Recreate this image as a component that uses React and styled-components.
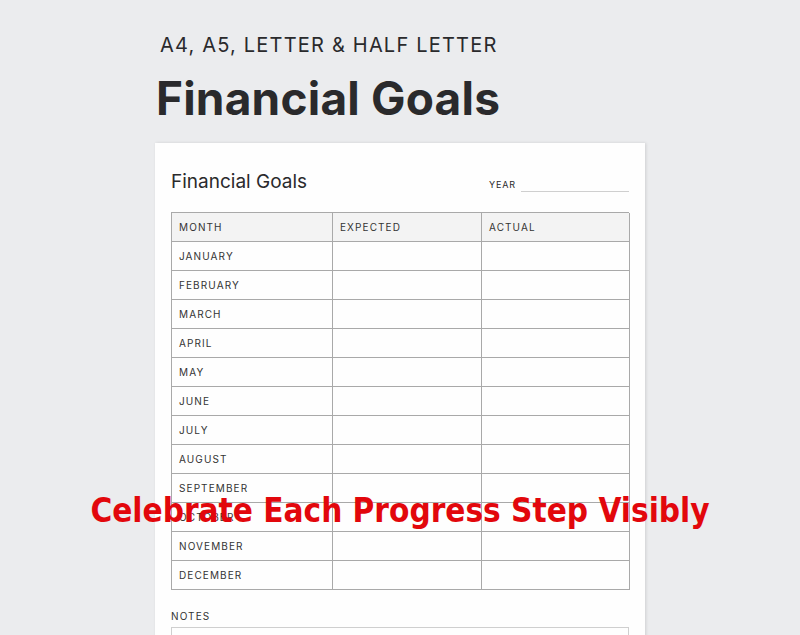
import React from "react";
import styled, { createGlobalStyle } from "styled-components";

const GlobalStyle = createGlobalStyle`
  html, body {
    margin: 0;
    padding: 0;
    background: #ebecee;
    overflow: hidden;
  }
`;

const Page = styled.div`
  position: relative;
  width: 800px;
  height: 635px;
  overflow: hidden;
  background: #ebecee;
  font-family: Inter, "Noto Sans", sans-serif;
  color: #2a2a2c;
`;

const Head = styled.div`
  padding: 32px 0 0 156px;
`;

const Sub = styled.div`
  font-size: 20px;
  letter-spacing: 1.2px;
  line-height: 26px;
  padding-left: 4px;
  font-weight: 400;
`;

const Big = styled.h1`
  margin: 12px 0 0;
  font-size: 46px;
  line-height: 56px;
  font-weight: 700;
  letter-spacing: 0.2px;
`;

const Paper = styled.div`
  margin: 17px 0 0 155px;
  width: 490px;
  height: 520px;
  background: #fefefe;
  box-shadow: 1px 0 3px rgba(0, 0, 0, 0.12);
  padding: 28px 16px 0 16px;
  box-sizing: border-box;
`;

const TitleRow = styled.div`
  display: flex;
  align-items: flex-end;
  justify-content: space-between;
  height: 22px;
`;

const PaperTitle = styled.div`
  font-size: 19px;
  line-height: 22px;
  font-weight: 400;
  color: #2a2a2c;
`;

const Year = styled.div`
  display: flex;
  align-items: flex-end;
  font-size: 9px;
  letter-spacing: 0.9px;
  padding-bottom: 3px;
  span {
    margin-right: 5px;
  }
  i {
    display: block;
    width: 108px;
    margin-bottom: -2px;
    border-bottom: 1px solid #cfcfcf;
  }
`;

const Table = styled.div`
  margin-top: 19px;
  display: grid;
  grid-template-columns: 161px 149px 148px;
  border-top: 1px solid #a9a9a9;
  border-left: 1px solid #a9a9a9;
`;

const Cell = styled.div`
  height: 28px;
  border-right: 1px solid #a9a9a9;
  border-bottom: 1px solid #a9a9a9;
  background: ${(p) => (p.$head ? "#f3f3f3" : "transparent")};
  font-size: 10px;
  letter-spacing: 1.1px;
  display: flex;
  align-items: center;
  padding-left: 7px;
  color: #333;
`;

const NotesLabel = styled.div`
  margin-top: 20px;
  font-size: 10px;
  letter-spacing: 1.1px;
  color: #333;
`;

const NotesBox = styled.div`
  margin-top: 5px;
  height: 60px;
  border: 1px solid #cfcfcf;
`;

const Overlay = styled.div`
  position: absolute;
  left: 0;
  right: 0;
  top: 487px;
  text-align: center;
  font-family: "DejaVu Sans Condensed", "DejaVu Sans", sans-serif;
  font-weight: 700;
  font-size: 33px;
  line-height: 48px;
  color: #e2070c;
`;

const months = [
  "JANUARY",
  "FEBRUARY",
  "MARCH",
  "APRIL",
  "MAY",
  "JUNE",
  "JULY",
  "AUGUST",
  "SEPTEMBER",
  "OCTOBER",
  "NOVEMBER",
  "DECEMBER",
];

export default function App() {
  return (
    <Page>
      <GlobalStyle />
      <Head>
        <Sub>A4, A5, LETTER &amp; HALF LETTER</Sub>
        <Big>Financial Goals</Big>
      </Head>
      <Paper>
        <TitleRow>
          <PaperTitle>Financial Goals</PaperTitle>
          <Year>
            <span>YEAR</span>
            <i />
          </Year>
        </TitleRow>
        <Table>
          <Cell $head>MONTH</Cell>
          <Cell $head>EXPECTED</Cell>
          <Cell $head>ACTUAL</Cell>
          {months.map((m) => (
            <React.Fragment key={m}>
              <Cell>{m}</Cell>
              <Cell />
              <Cell />
            </React.Fragment>
          ))}
        </Table>
        <NotesLabel>NOTES</NotesLabel>
        <NotesBox />
      </Paper>
      <Overlay>Celebrate Each Progress Step Visibly</Overlay>
    </Page>
  );
}
